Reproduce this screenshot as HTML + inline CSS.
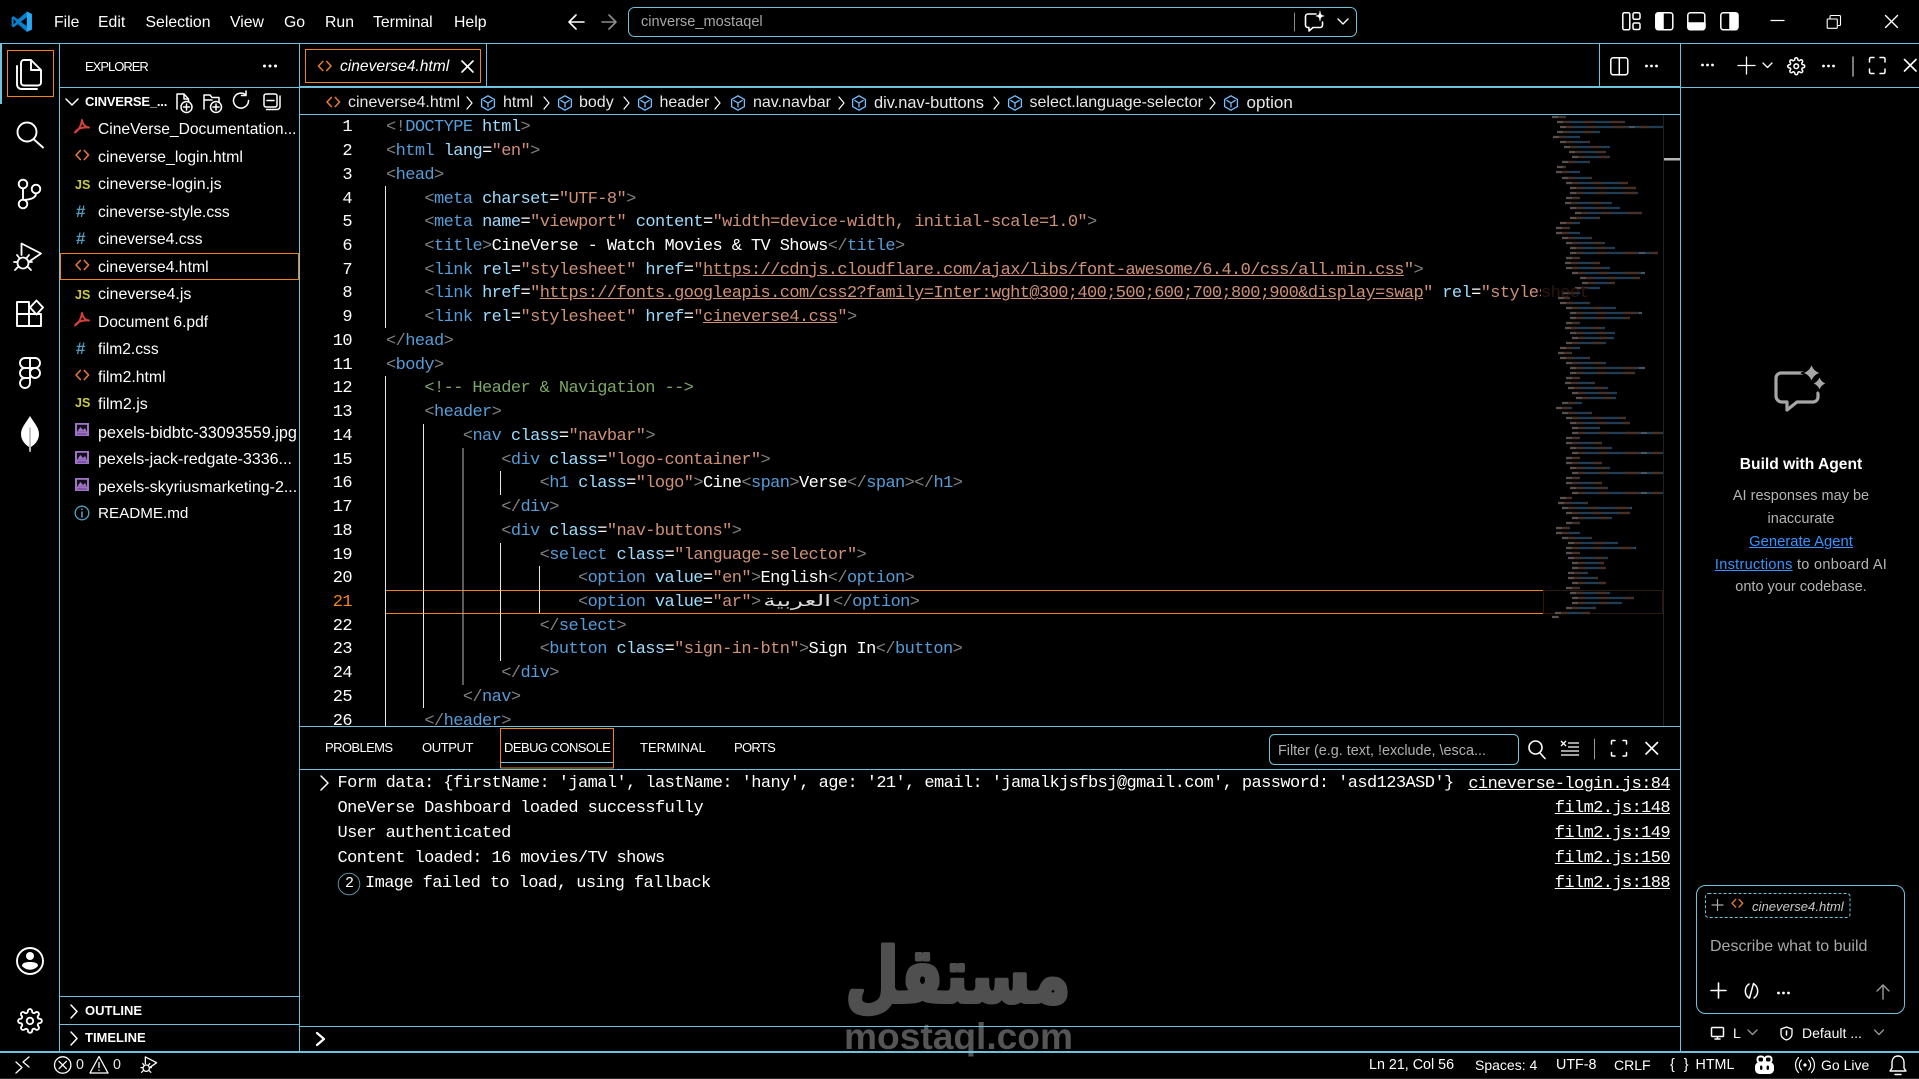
<!DOCTYPE html>
<html lang="en"><head><meta charset="utf-8"><title>cinverse_mostaqel - VS Code</title>
<style>
html,body{margin:0;padding:0;background:#000;width:1919px;height:1079px;overflow:hidden}
body{position:relative;font-family:"Liberation Sans",Arial,sans-serif;color:#fff}
svg.o{position:absolute;left:0;top:0}
.t{position:absolute;line-height:20px;height:20px;white-space:pre;font-size:16px}
.m{font-size:15.8px}
.h{font-size:13px}
.b13{font-size:13px;font-weight:bold}
.bc{color:#e8e8e8;font-size:16px}
.mono{font-family:"Liberation Mono",monospace;font-size:17px;letter-spacing:-.6px}
pre{margin:0;position:absolute;white-space:pre;overflow:hidden}
#code,#nums{top:116.300px;height:609.7px;line-height:23.74px}
#code{left:386px;width:1155px}
#nums{left:300px;width:52px;text-align:right}
#con{left:337.5px;top:772px;line-height:24.95px;letter-spacing:-.58px}
.p{color:#808080}.g{color:#569cd6}.n{color:#9cdcfe}.s{color:#ce9178}.c{color:#7ca668}.u{text-decoration:underline}
.lnk{position:absolute;right:249px;line-height:20px;text-decoration:underline}
.mid{text-align:center;position:absolute;left:1700px;width:202px;font-size:14.5px;line-height:20px;color:#b4b4b4;white-space:pre}
.mid a{color:#3794ff;text-decoration:underline}
.hash{font-weight:bold;color:#519aba;font-size:17px}
.js{font-size:12.5px;font-weight:bold;color:#cbcb41}
</style></head><body>
<svg class="o" width="1919" height="1079" viewBox="0 0 1919 1079" fill="none" stroke="#fff" stroke-width="1.6" stroke-linecap="round" stroke-linejoin="round">
<defs>
<path id="gear" d="M19.4 15a1.65 1.65 0 0 0 .33 1.82l.06.06a2 2 0 0 1 0 2.83 2 2 0 0 1-2.83 0l-.06-.06a1.65 1.65 0 0 0-1.82-.33 1.65 1.65 0 0 0-1 1.51V21a2 2 0 0 1-2 2 2 2 0 0 1-2-2v-.09A1.65 1.65 0 0 0 9 19.4a1.65 1.65 0 0 0-1.82.33l-.06.06a2 2 0 0 1-2.83 0 2 2 0 0 1 0-2.83l.06-.06a1.65 1.65 0 0 0 .33-1.82 1.65 1.65 0 0 0-1.51-1H3a2 2 0 0 1-2-2 2 2 0 0 1 2-2h.09A1.65 1.65 0 0 0 4.6 9a1.65 1.65 0 0 0-.33-1.82l-.06-.06a2 2 0 0 1 0-2.83 2 2 0 0 1 2.83 0l.06.06a1.65 1.65 0 0 0 1.82.33H9a1.65 1.65 0 0 0 1-1.51V3a2 2 0 0 1 2-2 2 2 0 0 1 2 2v.09a1.65 1.65 0 0 0 1 1.51 1.65 1.65 0 0 0 1.82-.33l.06-.06a2 2 0 0 1 2.83 0 2 2 0 0 1 0 2.83l-.06.06a1.65 1.65 0 0 0-.33 1.82V9a1.65 1.65 0 0 0 1.51 1H21a2 2 0 0 1 2 2 2 2 0 0 1-2 2h-.09a1.65 1.65 0 0 0-1.51 1z M15 12a3 3 0 1 1-6 0 3 3 0 0 1 6 0z"/>
<g id="cube" stroke="#75beff" stroke-width="1.3"><path d="M8 .8 14.4 4.4V11.6L8 15.2 1.6 11.6V4.4Z"/><path d="M3.8 5.4 8 8l4.2-2.6M8 8v4"/></g>
<path id="htm" stroke="#e37933" stroke-width="1.6" d="M4.3 .5 0 5l4.3 4.5M8.3 .5 12.600 5l-4.3 4.5"/>
<g id="pdf" stroke="#d0413b" stroke-width="2"><path d="M7 0c-.5 5-3 10-7 12.500M7 0c.6 4 3 7 7 7.500M1 11c3-3 8-4 13-3.500"/></g>
<g id="img"><rect x="0" y="0" width="14" height="13" fill="#a074c4" stroke="none"/><rect x="2" y="1.800" width="10" height="7" fill="#10101c" stroke="none"/><path d="M2 8.800 5.500 4 8 7l2-2 2 3.800z" fill="#a074c4" stroke="none"/><path d="M3 11h8" stroke="#7c55a8" stroke-width="2"/></g>
<g id="bug"><path d="M7.500 1V-10.500L27 -.5 16 7"/><circle cx="9" cy="9" r="5.500"/><path d="M5 3.500 3 1M13 3.500 15 1M3.500 8H0M14.500 8H18M4 13 1 16M14 13l3 3"/></g>
</defs>

<!-- watermark -->
<g stroke="none">
<text x="958" y="1002" text-anchor="middle" font-family="DejaVu Sans,sans-serif" font-weight="bold" font-size="76" fill="#4f4f4f" stroke="#4f4f4f" stroke-width="4" textLength="225" lengthAdjust="spacingAndGlyphs">مستقل</text>
<text x="844" y="1049" font-family="Liberation Sans,sans-serif" font-weight="bold" font-size="37" fill="#555" textLength="229" lengthAdjust="spacingAndGlyphs">mostaql.com</text>
</g>

<!-- structure lines -->
<g stroke="#6fc3df" stroke-width="1" stroke-linecap="butt">
<path d="M0 43.500H1919M59.500 44V1051M299.500 44V1051M1680.500 44V1051M60 87.500H299M1681 87.500H1919M486.500 44V86M1599.500 44V86M300 114.500H1680M300 726.500H1680M300 769.500H1680M300 1026.500H1680M60 996.500H299M60 1024.500H299M501 762.500H613"/>
</g>
<rect x="300" y="86" width="1380" height="2" fill="#6fc3df" stroke="none"/>
<rect x="0" y="1051" width="1919" height="2" fill="#6fc3df" stroke="none"/>
<rect x="0" y="1078" width="1919" height="1" fill="#2a2a2a" stroke="none"/>
<rect x="0" y="43" width="2" height="61" fill="#6fc3df" stroke="none"/>

<!-- orange outlines -->
<g stroke="#f38518" stroke-width="1" stroke-linecap="butt">
<rect x="7.500" y="50.500" width="46" height="46"/>
<rect x="60.500" y="253.500" width="238" height="26"/>
<rect x="305.500" y="49.500" width="175" height="33"/>
<rect x="500.500" y="728.500" width="113" height="39.500"/>
<path d="M386 590.500H1543M386 613.500H1543"/>
</g>
<rect x="1543.500" y="590.500" width="119" height="23" stroke="#2a1a0c" stroke-width="1"/>

<!-- indent guides -->
<g stroke="#e8e8e8" stroke-width="1" stroke-linecap="butt">
<path d="M385.500 186V328M385.500 376V726M423.500 424V708M500.500 471V495M500.500 543V661M539.500 566V613"/>
<path d="M463 448V685" stroke="#b8b8b8"/>
</g>

<!-- VS Code logo -->
<g transform="translate(11 11) scale(.215)" stroke="none">
<path fill="#0a7fcb" d="M74 3 32 39 12 24 3 29V71L12 76 32 61 74 97 97 86V14ZM74 29V71L46 50ZM12 37 24 50 12 63Z" fill-rule="evenodd"/>
<path fill="#2aa9f3" d="M74 3 97 14V86L74 97V71L74 29Z"/>
</g>

<!-- nav arrows -->
<path d="M584 27H569M576 20l-7 7 7 7" transform="translate(0 -5)"/>
<path d="M602 27H616M609 20l7 7-7 7" transform="translate(0 -5)" stroke="#8c8c8c"/>

<!-- command center -->
<rect x="628.500" y="7.500" width="728" height="29" rx="6" stroke="#6fc3df" stroke-width="1"/>
<path d="M1294.500 13V31" stroke="#8a8a8a" stroke-width="1"/>
<path d="M1316 14H1308a2.500 2.500 0 0 0-2.500 2.500V25a2.500 2.500 0 0 0 2.500 2.500h1V31l4-3.500h7a2.500 2.500 0 0 0 2.500-2.500V22"/>
<path d="M1320 11q0 5 4 5-4 0-4 5 0-5-4-5 4 0 4-5z" fill="#fff" stroke-width=".8"/>
<path d="M1338 19l5 5 5-5" stroke-width="1.400"/>

<!-- title right -->
<g stroke-width="1.500">
<rect x="1622.800" y="12.800" width="7" height="17" rx="1.500"/>
<rect x="1633" y="12.800" width="7" height="6.500" rx="1.500"/><rect x="1633" y="23" width="7" height="6.500" rx="1.500"/>
<rect x="1655.800" y="12.800" width="17" height="17" rx="2.500"/><path d="M1656 15a2 2 0 0 1 2-2h5v16h-5a2 2 0 0 1-2-2z" fill="#fff"/>
<rect x="1687.800" y="12.800" width="17" height="17" rx="2.500"/><path d="M1688 23h17v4a2 2 0 0 1-2 2h-13a2 2 0 0 1-2-2z" fill="#fff"/>
<rect x="1720.800" y="12.800" width="17" height="17" rx="2.500"/><path d="M1730 13h6a2 2 0 0 1 2 2v12a2 2 0 0 1-2 2h-6z" fill="#fff"/>
</g>
<path d="M1771 20.500H1784" stroke-width="1.200"/>
<path d="M1828 19h8.500a.8.800 0 0 1 .8.800V27.500a.8.800 0 0 1-.8.800H1828a.8.800 0 0 1-.8-.800V19.800a.8.800 0 0 1 .8-.800zM1830 18.500V16.500a1 1 0 0 1 1-1h8.500a1 1 0 0 1 1 1v8a1 1 0 0 1-1 1h-2" stroke-width="1.100"/>
<path d="M1885.500 15.500 1897.500 27.500M1897.500 15.500 1885.500 27.500" stroke-width="1.400"/>

<!-- activity bar -->
<g stroke-width="1.900">
<path d="M24 60h7l10 10v12.500a3 3 0 0 1-3 3H24a3 3 0 0 1-3-3V63a3 3 0 0 1 3-3zM31 60v10h10M17 66v18.500a4.500 4.500 0 0 0 4.500 4.500H37"/>
<circle cx="27" cy="132" r="9.500"/><path d="M34 139.500 43 147.500"/>
<circle cx="23" cy="184" r="4.300"/><circle cx="23" cy="204" r="4.300"/><circle cx="36" cy="189" r="4.300"/><path d="M23 188.500V199.500M36 193.500c0 4.500-5 6-12 6.500"/>
<use href="#bug" transform="translate(14 254)" stroke-width="1.800"/>
<path d="M17 302h12v24H17zM17 314h24v12H29M36.500 300.500l6.500 7-6.500 7-6.500-7z"/>
<path d="M30 358h-5a5 5 0 0 0 0 10h5zM30 358h5a5 5 0 0 1 0 10h-5zM30 368h-5a5 5 0 0 0 0 10h5z"/><circle cx="35" cy="373" r="5"/><path d="M25 378a5 5 0 1 0 5 5v-5z"/>
<path d="M30 416c5 8 9 12 9 18 0 7-5 11-8 13l-.5 5h-1l-.5-5c-3-2-8-6-8-13 0-6 4-10 9-18z" fill="#fff" stroke="none"/><path d="M30 428V448" stroke="#888" stroke-width="1"/>
<circle cx="30" cy="961" r="13"/><circle cx="30" cy="956" r="4" fill="#fff" stroke="none"/><path d="M22 966c0-3 3-4 8-4s8 1 8 4a10.500 10.500 0 0 1-16 0z" fill="#fff" stroke="none"/>
<use href="#gear" transform="translate(17 1008) scale(1.080)" stroke-width="1.700"/>
</g>

<!-- sidebar head icons -->
<g fill="#fff" stroke="none"><circle cx="264.500" cy="66" r="1.500"/><circle cx="270" cy="66" r="1.500"/><circle cx="275.500" cy="66" r="1.500"/></g>
<path d="M66 99l6 6 6-6" stroke-width="1.500"/>
<g stroke-width="1.500">
<path d="M177 109V94h7l4.500 5v3M184 94v5h4.500"/><circle cx="186.500" cy="107" r="5.500" fill="#000"/><path d="M186.500 104v6M183.500 107h6"/>
<path d="M204 109V95h6l2 2.500h7v5M204 100h8"/><circle cx="216" cy="107" r="5.500" fill="#000"/><path d="M216 104v6M213 107h6"/>
<path d="M248.500 100.500a7.500 7.500 0 1 1-2.500-5.500M246 91v4.500h-4.500"/>
<rect x="264" y="94" width="13" height="13" rx="2"/><path d="M267 100.500h7M280 96v10.500a3 3 0 0 1-3 3h-10.500"/>
</g>

<!-- file icons -->
<use href="#pdf" x="75" y="120"/>
<use href="#htm" x="76" y="150"/>
<use href="#htm" x="76" y="260"/>
<use href="#pdf" x="75" y="313"/>
<use href="#htm" x="76" y="370"/>
<use href="#img" x="75" y="423"/>
<use href="#img" x="75" y="451"/>
<use href="#img" x="75" y="478"/>
<circle cx="82" cy="513" r="6.800" stroke="#519aba" stroke-width="1.400"/><path d="M82 512v5M82 509v.4" stroke="#519aba" stroke-width="1.600"/>

<!-- tab -->
<use href="#htm" x="318.500" y="61"/>
<path d="M462 61l11 11M473 61l-11 11" stroke-width="1.600"/>

<!-- editor actions -->
<rect x="1610.800" y="57.800" width="17" height="17" rx="2.500" stroke-width="1.500"/><path d="M1619.300 58V75" stroke-width="1.500"/>
<g fill="#fff" stroke="none"><circle cx="1646.500" cy="66" r="1.400"/><circle cx="1651.500" cy="66" r="1.400"/><circle cx="1656.500" cy="66" r="1.400"/>
<circle cx="1702.500" cy="65" r="1.400"/><circle cx="1707.500" cy="65" r="1.400"/><circle cx="1712.500" cy="65" r="1.400"/>
<circle cx="1823.500" cy="66" r="1.400"/><circle cx="1828.500" cy="66" r="1.400"/><circle cx="1833.500" cy="66" r="1.400"/></g>
<path d="M1746.500 57V74M1738 65.500H1755" stroke-width="1.300"/>
<path d="M1763 63l4.500 4.500L1772 63" stroke-width="1.300"/>
<use href="#gear" transform="translate(1787 57) scale(.77)" stroke-width="2"/>
<path d="M1853 57V76" stroke="#9a9a9a" stroke-width="1.600"/>
<path d="M1869.500 62V59a1.500 1.500 0 0 1 1.500-1.500h3M1880 57.500h3.500a1.500 1.500 0 0 1 1.500 1.500v3M1885 69v3a1.500 1.500 0 0 1-1.500 1.500H1880M1874 73.500h-3a1.500 1.500 0 0 1-1.500-1.500v-3" stroke-width="1.500"/>
<path d="M1904.500 59.500 1916 71M1916 59.500 1904.500 71" stroke-width="1.600"/>

<!-- breadcrumb -->
<use href="#htm" x="327" y="97"/>
<g stroke="#fff" stroke-width="1.200"><path d="M467 97l5 6-5 6M544 97l5 6-5 6M624 97l5 6-5 6M715 97l5 6-5 6M839 97l5 6-5 6M994 97l5 6-5 6M1210 97l5 6-5 6"/></g>
<use href="#cube" x="480" y="95"/><use href="#cube" x="557" y="95"/><use href="#cube" x="637" y="95"/><use href="#cube" x="730" y="95"/><use href="#cube" x="851" y="95"/><use href="#cube" x="1007" y="95"/><use href="#cube" x="1223" y="95"/>

<!-- minimap -->
<g stroke="#1f3d55" stroke-width="2.200" stroke-linecap="butt">
<path id="mm" d="M1552 117h14M1557 122h68M1560 127h103M1557 132h43M1553 137h27M1560 142h30M1564 147h46M1569 152h37M1572 157h38M1562 162h28M1557 167h9M1556 172h24M1562 178h30M1566 183h62M1570 188h66M1570 193h68M1566 198h14M1565 203h47M1570 208h50M1575 213h67M1570 218h30M1560 223h20M1556 228h14M1556 233h24M1562 238h30M1566 243h39M1570 248h45M1570 253h88M1566 258h14M1565 263h35M1566 268h44M1572 273h73M1580 278h60M1582 283h33M1575 288h25M1562 293h18M1558 298h12M1560 303h30M1566 308h50M1570 313h72M1570 318h60M1566 323h14M1565 328h40M1570 333h45M1572 338h42M1566 343h40M1560 348h20M1558 353h14M1560 358h30M1566 363h40M1570 368h75M1570 373h65M1566 378h14M1565 383h30M1568 388h40M1572 393h45M1576 398h40M1562 403h20M1556 408h16M1562 413h30M1566 418h60M1570 423h60M1572 428h28M1572 433h91M1566 438h14M1566 443h36M1570 448h42M1572 453h91M1566 458h14M1566 463h36M1570 468h40M1572 473h91M1566 478h14M1566 483h36M1570 488h38M1572 493h91M1560 498h12M1558 503h30M1562 508h70M1566 513h64M1572 518h40M1566 523h14M1556 528h14M1556 533h24M1562 538h30M1568 543h50M1566 548h70M1566 553h14M1568 558h40M1572 563h32M1572 568h34M1568 573h20M1568 578h30M1572 583h34M1566 588h14M1570 593h40M1572 598h62M1572 603h50M1566 608h30M1555 613h35M1552 617h7"/>
</g>
<use href="#mm" stroke="#4a3024" stroke-width="2.200" stroke-dasharray="13 14 9 17" stroke-linecap="butt"/>
<use href="#mm" stroke="#5c5c5c" stroke-width="1.400" stroke-dasharray="6 63" stroke-linecap="butt"/>
<path d="M1663.500 115V726" stroke="#222" stroke-width="1" stroke-linecap="butt"/>
<rect x="1664" y="158" width="16" height="2.500" fill="#b4b4b4" stroke="none"/>

<!-- panel actions -->
<rect x="1269.500" y="734.500" width="249" height="30" rx="5" stroke="#6fc3df" stroke-width="1"/>
<circle cx="1535.500" cy="747.500" r="6.500" stroke-width="1.600"/><path d="M1540 753l5 5.500" stroke-width="1.600"/>
<path d="M1561 741l5 5M1566 741l-5 5M1568 743h11M1568 747h11M1561 751h18M1561 755h18" stroke-width="1.300" stroke-linecap="butt"/>
<path d="M1594.500 739V759" stroke="#9a9a9a" stroke-width="1"/>
<path d="M1611.500 744v-2.500a1 1 0 0 1 1-1h2.500M1623 740.500h2.500a1 1 0 0 1 1 1V744M1626.500 752.500v2.500a1 1 0 0 1-1 1H1623M1615 756h-2.500a1 1 0 0 1-1-1v-2.500" stroke-width="1.500"/>
<path d="M1646 742.500l11.500 11.500M1657.500 742.500 1646 754" stroke-width="1.600"/>

<!-- console -->
<path d="M321 776l7 7-7 7" stroke-width="1.500"/>
<circle cx="349" cy="884" r="10.800" stroke="#5d8fa3" stroke-width="1"/>
<path d="M317 1033l7 6-7 6" stroke-width="2.200"/>

<!-- sidebar sections chevrons -->
<path d="M71 1005l6 6.500-6 6.500M71 1032l6 6.500-6 6.500" stroke-width="1.500"/>

<!-- chat panel -->
<g stroke="#a6a6a6" stroke-width="3.200">
<path d="M1806 373H1781a5 5 0 0 0-5 5V396a6 6 0 0 0 6 6h5v8l10-8h16a5 5 0 0 0 5-5v-4"/>
</g>
<g fill="#a6a6a6" stroke="#000" stroke-width="1.500">
<path d="M1811.500 363q2 8 10 10-8 2-10 10-2-8-10-10 8-2 10-10z"/>
<path d="M1819.500 375q1.500 7 8.500 8.500-7 1.500-8.500 8.500-1.500-7-8.500-8.500 7-1.500 8.500-8.500z"/>
</g>
<rect x="1696.500" y="885.500" width="208" height="128" rx="9" stroke="#6fc3df" stroke-width="1"/>
<rect x="1705.500" y="893.500" width="144.500" height="24" rx="3" stroke="#6fc3df" stroke-width="1" stroke-dasharray="3 2" stroke-linecap="butt"/>
<path d="M1717.500 899.500v11M1712 905h11" stroke="#a8a8a8" stroke-width="1.200"/>
<use href="#htm" transform="translate(1732 899) scale(.85)"/>
<path d="M1718.500 983v15M1711 990.500h15" stroke-width="1.600"/>
<path d="M1749 984a8.500 8.500 0 0 0 0 14M1754 984a8.500 8.500 0 0 1 0 14M1753.500 983.500 1749.500 998" stroke-width="1.500"/>
<g fill="#fff" stroke="none"><circle cx="1778.500" cy="993" r="1.400"/><circle cx="1783.500" cy="993" r="1.400"/><circle cx="1788.500" cy="993" r="1.400"/></g>
<path d="M1883 999V985M1877 991l6-6 6 6" stroke="#9a9a9a" stroke-width="1.400"/>
<rect x="1711.500" y="1027.500" width="12" height="9" rx="1" stroke-width="1.500"/><path d="M1715 1039h5M1717.500 1037v2" stroke-width="1.500"/>
<path d="M1748 1030l4.500 4.500 4.500-4.500" stroke="#9a9a9a" stroke-width="1.300"/>
<path d="M1786.500 1027l5.500 2v5c0 3-2.500 5-5.500 6-3-1-5.500-3-5.500-6v-5z" stroke-width="1.300"/><path d="M1786.500 1031v4" stroke-width="1.500"/>
<path d="M1874.500 1030l4.500 4.500 4.500-4.500" stroke="#9a9a9a" stroke-width="1.300"/>

<!-- status left -->
<path d="M16 1062l6 5.500-6 5.500M29 1057l-6 5 6 5" stroke-width="1.300"/>
<circle cx="62.700" cy="1065" r="8.200" stroke-width="1.300"/><path d="M59 1061.300l7.400 7.400M66.400 1061.300 59 1068.700" stroke-width="1.300"/>
<path d="M99 1056.500 108 1073H90ZM99 1062.500v5M99 1070v.3" stroke-width="1.300"/>
<g transform="translate(141 1063) scale(.58)" stroke-width="2.200"><use href="#bug"/></g>

<!-- status right -->
<rect x="1757.500" y="1056.500" width="6.500" height="6" rx="2.500" stroke-width="2"/>
<rect x="1765" y="1056.500" width="6.500" height="6" rx="2.500" stroke-width="2"/>
<rect x="1755" y="1062" width="19" height="12" rx="4.500" fill="#fff" stroke="none"/>
<rect x="1760" y="1065.500" width="2.400" height="4.500" rx="1.200" fill="#000" stroke="none"/><rect x="1766.600" y="1065.500" width="2.400" height="4.500" rx="1.200" fill="#000" stroke="none"/>
<circle cx="1805" cy="1065" r="1.600" fill="#fff" stroke="none"/>
<path d="M1801.500 1060a7 7 0 0 0 0 10M1808.500 1060a7 7 0 0 1 0 10M1798.500 1057.500a11 11 0 0 0 0 15M1811.500 1057.500a11 11 0 0 1 0 15" stroke-width="1.200"/>
<path d="M1898 1056c-4 0-6 3-6 7v5l-2 3h16l-2-3v-5c0-4-2-7-6-7zM1895 1074.500h6" stroke-width="1.400"/>
</svg>

<!-- menus -->
<div class="t m" style="left:54px;top:13px">File</div>
<div class="t m" style="left:98px;top:13px">Edit</div>
<div class="t m" style="left:145.500px;top:13px">Selection</div>
<div class="t m" style="left:230px;top:13px">View</div>
<div class="t m" style="left:284px;top:13px">Go</div>
<div class="t m" style="left:325px;top:13px">Run</div>
<div class="t m" style="left:373px;top:13px">Terminal</div>
<div class="t m" style="left:454px;top:13px">Help</div>
<div class="t" style="left:641px;top:12px;font-size:14.6px;color:#a8a8a8">cinverse_mostaqel</div>

<!-- sidebar -->
<div class="t h" style="left:85px;top:56.500px;letter-spacing:-1px">EXPLORER</div>
<div class="t b13" style="left:85px;top:92px;letter-spacing:-.2px">CINVERSE_...</div>
<div class="t" style="left:98px;top:119.500px;width:200px;overflow:hidden;font-size:15.6px">CineVerse_Documentation...</div>
<div class="t" style="left:98px;top:148px;font-size:15.9px">cineverse_login.html</div>
<div class="t js" style="left:75px;top:175px">JS</div>
<div class="t" style="left:98px;top:175px">cineverse-login.js</div>
<div class="t hash" style="left:76px;top:202px">#</div>
<div class="t" style="left:98px;top:203px;font-size:15.6px">cineverse-style.css</div>
<div class="t hash" style="left:76px;top:229px">#</div>
<div class="t" style="left:98px;top:230px;font-size:15.8px">cineverse4.css</div>
<div class="t" style="left:98px;top:257.500px;font-size:15.8px">cineverse4.html</div>
<div class="t js" style="left:75px;top:285px">JS</div>
<div class="t" style="left:98px;top:285px">cineverse4.js</div>
<div class="t" style="left:98px;top:313px;font-size:15.6px">Document 6.pdf</div>
<div class="t hash" style="left:76px;top:339px">#</div>
<div class="t" style="left:98px;top:340px;font-size:15.6px">film2.css</div>
<div class="t" style="left:98px;top:367.500px;font-size:15.8px">film2.html</div>
<div class="t js" style="left:75px;top:393px">JS</div>
<div class="t" style="left:98px;top:395px">film2.js</div>
<div class="t" style="left:98px;top:422.500px;width:200px;overflow:hidden;font-size:16.2px">pexels-bidbtc-33093559.jpg</div>
<div class="t" style="left:98px;top:450px;width:199px;overflow:hidden">pexels-jack-redgate-3336...</div>
<div class="t" style="left:98px;top:477.500px;width:199px;overflow:hidden">pexels-skyriusmarketing-2...</div>
<div class="t" style="left:98px;top:504px;font-size:15.2px">README.md</div>
<div class="t b13" style="left:85px;top:1001px">OUTLINE</div>
<div class="t b13" style="left:85px;top:1028px">TIMELINE</div>

<!-- tab -->
<div class="t" style="left:340px;top:57px;font-size:15.6px;font-style:italic">cineverse4.html</div>

<!-- breadcrumb -->
<div class="t bc" style="left:348px;top:93px">cineverse4.html</div>
<div class="t bc" style="left:503px;top:93px">html</div>
<div class="t bc" style="left:579px;top:93px">body</div>
<div class="t bc" style="left:659.500px;top:93px">header</div>
<div class="t bc" style="left:753px;top:93px">nav.navbar</div>
<div class="t bc" style="left:874px;top:93px;font-size:16.4px">div.nav-buttons</div>
<div class="t bc" style="left:1029.500px;top:93px">select.language-selector</div>
<div class="t bc" style="left:1246.500px;top:93px;font-size:17px">option</div>

<!-- line numbers -->
<pre id="nums" class="mono">1
2
3
4
5
6
7
8
9
10
11
12
13
14
15
16
17
18
19
20
<span style="color:#f38518">21</span>
22
23
24
25
26</pre>

<!-- code -->
<pre id="code" class="mono"><span class="p">&lt;!</span><span class="g">DOCTYPE</span> <span class="n">html</span><span class="p">&gt;</span>
<span class="p">&lt;</span><span class="g">html</span> <span class="n">lang</span>=<span class="s">"en"</span><span class="p">&gt;</span>
<span class="p">&lt;</span><span class="g">head</span><span class="p">&gt;</span>
    <span class="p">&lt;</span><span class="g">meta</span> <span class="n">charset</span>=<span class="s">"UTF-8"</span><span class="p">&gt;</span>
    <span class="p">&lt;</span><span class="g">meta</span> <span class="n">name</span>=<span class="s">"viewport"</span> <span class="n">content</span>=<span class="s">"width=device-width, initial-scale=1.0"</span><span class="p">&gt;</span>
    <span class="p">&lt;</span><span class="g">title</span><span class="p">&gt;</span>CineVerse - Watch Movies &amp; TV Shows<span class="p">&lt;/</span><span class="g">title</span><span class="p">&gt;</span>
    <span class="p">&lt;</span><span class="g">link</span> <span class="n">rel</span>=<span class="s">"stylesheet"</span> <span class="n">href</span>=<span class="s">"<span class="u">https://cdnjs.cloudflare.com/ajax/libs/font-awesome/6.4.0/css/all.min.css</span>"</span><span class="p">&gt;</span>
    <span class="p">&lt;</span><span class="g">link</span> <span class="n">href</span>=<span class="s">"<span class="u">https://fonts.googleapis.com/css2?family=Inter:wght@300;400;500;600;700;800;900&amp;display=swap</span>"</span> <span class="n">rel</span>=<span class="s">"stylesheet"</span><span class="p">&gt;</span>
    <span class="p">&lt;</span><span class="g">link</span> <span class="n">rel</span>=<span class="s">"stylesheet"</span> <span class="n">href</span>=<span class="s">"<span class="u">cineverse4.css</span>"</span><span class="p">&gt;</span>
<span class="p">&lt;/</span><span class="g">head</span><span class="p">&gt;</span>
<span class="p">&lt;</span><span class="g">body</span><span class="p">&gt;</span>
    <span class="c">&lt;!-- Header &amp; Navigation --&gt;</span>
    <span class="p">&lt;</span><span class="g">header</span><span class="p">&gt;</span>
        <span class="p">&lt;</span><span class="g">nav</span> <span class="n">class</span>=<span class="s">"navbar"</span><span class="p">&gt;</span>
            <span class="p">&lt;</span><span class="g">div</span> <span class="n">class</span>=<span class="s">"logo-container"</span><span class="p">&gt;</span>
                <span class="p">&lt;</span><span class="g">h1</span> <span class="n">class</span>=<span class="s">"logo"</span><span class="p">&gt;</span>Cine<span class="p">&lt;</span><span class="g">span</span><span class="p">&gt;</span>Verse<span class="p">&lt;/</span><span class="g">span</span><span class="p">&gt;&lt;/</span><span class="g">h1</span><span class="p">&gt;</span>
            <span class="p">&lt;/</span><span class="g">div</span><span class="p">&gt;</span>
            <span class="p">&lt;</span><span class="g">div</span> <span class="n">class</span>=<span class="s">"nav-buttons"</span><span class="p">&gt;</span>
                <span class="p">&lt;</span><span class="g">select</span> <span class="n">class</span>=<span class="s">"language-selector"</span><span class="p">&gt;</span>
                    <span class="p">&lt;</span><span class="g">option</span> <span class="n">value</span>=<span class="s">"en"</span><span class="p">&gt;</span>English<span class="p">&lt;/</span><span class="g">option</span><span class="p">&gt;</span>
                    <span class="p">&lt;</span><span class="g">option</span> <span class="n">value</span>=<span class="s">"ar"</span><span class="p">&gt;</span><span style="display:inline-block;width:72.4px;font-family:'DejaVu Sans',sans-serif;font-size:16px;letter-spacing:0;text-align:center;line-height:20px;vertical-align:baseline;transform:scaleX(1.55);color:#ddd" dir="rtl">العربية</span><span class="p">&lt;/</span><span class="g">option</span><span class="p">&gt;</span>
                <span class="p">&lt;/</span><span class="g">select</span><span class="p">&gt;</span>
                <span class="p">&lt;</span><span class="g">button</span> <span class="n">class</span>=<span class="s">"sign-in-btn"</span><span class="p">&gt;</span>Sign In<span class="p">&lt;/</span><span class="g">button</span><span class="p">&gt;</span>
            <span class="p">&lt;/</span><span class="g">div</span><span class="p">&gt;</span>
        <span class="p">&lt;/</span><span class="g">nav</span><span class="p">&gt;</span>
    <span class="p">&lt;/</span><span class="g">header</span><span class="p">&gt;</span></pre>
<div class="t mono" style="left:1541px;top:283.500px;color:#2a1610">sheet</div>

<!-- panel tabs -->
<div class="t h" style="left:325px;top:738px;letter-spacing:-.6px">PROBLEMS</div>
<div class="t h" style="left:422px;top:738px;letter-spacing:-.4px">OUTPUT</div>
<div class="t h" style="left:504px;top:738px;letter-spacing:-.55px">DEBUG CONSOLE</div>
<div class="t h" style="left:640px;top:738px">TERMINAL</div>
<div class="t h" style="left:734px;top:738px;letter-spacing:-.7px">PORTS</div>
<div class="t" style="left:1278px;top:741px;font-size:14.4px;color:#b0b0b0">Filter (e.g. text, !exclude, \esca...</div>

<!-- console -->
<pre id="con" class="mono">Form data: {firstName: 'jamal', lastName: 'hany', age: '21', email: 'jamalkjsfbsj@gmail.com', password: 'asd123ASD'}
OneVerse Dashboard loaded successfully
User authenticated
Content loaded: 16 movies/TV shows</pre>
<div class="t mono" style="left:345px;top:874px;font-size:15px;letter-spacing:0">2</div>
<div class="t mono" style="left:365px;top:874px">Image failed to load, using fallback</div>
<div class="lnk mono" style="top:774.500px">cineverse-login.js:84</div>
<div class="lnk mono" style="top:799px">film2.js:148</div>
<div class="lnk mono" style="top:824px">film2.js:149</div>
<div class="lnk mono" style="top:849px">film2.js:150</div>
<div class="lnk mono" style="top:874px">film2.js:188</div>

<!-- chat -->
<div class="t" style="left:1700px;width:202px;text-align:center;top:454.500px;font-size:15.6px;font-weight:bold">Build with Agent</div>
<div class="mid" style="top:486px">AI responses may be</div>
<div class="mid" style="top:509px">inaccurate</div>
<div class="mid" style="top:532px"><a style="font-size:14.8px">Generate Agent</a></div>
<div class="mid" style="top:554.500px;letter-spacing:.3px"><a>Instructions</a> to onboard AI</div>
<div class="mid" style="top:577px">onto your codebase.</div>
<div class="t" style="left:1752px;top:897px;font-size:13.1px;font-style:italic;color:#c8c8c8">cineverse4.html</div>
<div class="t" style="left:1710px;top:937px;color:#a8a8a8">Describe what to build</div>
<div class="t" style="left:1733px;top:1023px;font-size:14px">L</div>
<div class="t" style="left:1802px;top:1023px;font-size:14px">Default ...</div>

<!-- status -->
<div class="t" style="left:76px;top:1055px;font-size:14.300px;color:#e8e8e8">0</div>
<div class="t" style="left:113px;top:1055px;font-size:14.300px;color:#e8e8e8">0</div>
<div class="t" style="left:1369px;top:1055px;font-size:14.300px">Ln 21, Col 56</div>
<div class="t" style="left:1475px;top:1055px;font-size:14px">Spaces: 4</div>
<div class="t" style="left:1556px;top:1055px;font-size:14.300px">UTF-8</div>
<div class="t" style="left:1614px;top:1055px;font-size:14px">CRLF</div>
<div class="t" style="left:1670px;top:1055px;font-size:14.300px;letter-spacing:2.500px">{ }</div>
<div class="t" style="left:1695.500px;top:1055px;font-size:14.300px">HTML</div>
<div class="t" style="left:1821px;top:1055px;font-size:14px">Go Live</div>
</body></html>
